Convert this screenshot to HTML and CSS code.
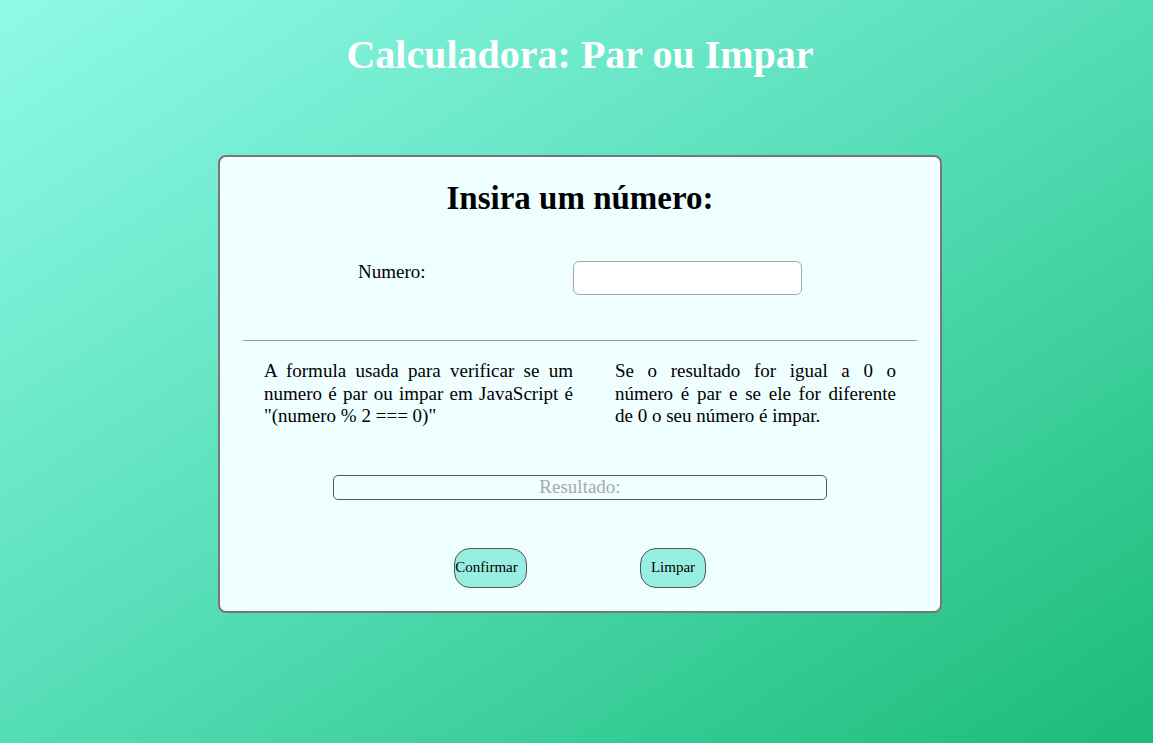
FILE: index.html
```html
<!DOCTYPE html>
<html lang="pt">
<head>
<meta charset="utf-8">
<title>Calculadora: Par ou Impar</title>
<link rel="stylesheet" href="styles.css">
</head>
<body>
<h1 class="title">Calculadora: Par ou Impar</h1>
<main class="card">
  <h2 class="card-title">Insira um número:</h2>
  <div class="field">
    <label class="field-label" for="numero">Numero:</label>
    <input class="field-input" id="numero" type="text">
  </div>
  <hr class="divider">
  <div class="info">
    <p class="info-text info-left">A formula usada para verificar se um numero é par ou impar em JavaScript é "(numero % 2 === 0)"</p>
    <p class="info-text info-right">Se o resultado for igual a 0 o número é par e se ele for diferente de 0 o seu número é impar.</p>
  </div>
  <div class="result-row">
    <input class="result" type="text" placeholder="Resultado:" readonly>
  </div>
  <div class="buttons">
    <button class="btn btn-confirm" type="button">Confirmar</button>
    <button class="btn btn-clear" type="button">Limpar</button>
  </div>
</main>
</body>
</html>
```
FILE: styles.css
```css
html, body {
  margin: 0;
  padding: 0;
}
body {
  min-height: 743px;
  background: linear-gradient(to bottom right, #8ffae8 0%, #55ddb6 50%, #1bbb78 100%);
  font-family: "Liberation Serif", "Times New Roman", serif;
  overflow: hidden;
}
.title {
  margin: 0;
  padding-top: 32px;
  height: 155px;
  box-sizing: border-box;
  text-align: center;
  color: #ffffff;
  font-size: 40px;
  font-weight: bold;
  line-height: 46px;
  padding-left: 7px;
}
.card {
  box-sizing: border-box;
  width: 724px;
  height: 458px;
  margin-left: 218px;
  background: #efffff;
  border: 2px solid #777777;
  border-radius: 8px;
  padding: 21px 23px 0 23px;
  color: #000;
}
.card-title {
  margin: 0;
  text-align: center;
  font-size: 33px;
  line-height: 40px;
  font-weight: bold;
}
.field {
  display: flex;
  margin-top: 43px;
  height: 34px;
}
.field-label {
  font-size: 19px;
  line-height: 22px;
  margin-left: 115px;
  width: 215px;
}
.field-input {
  box-sizing: border-box;
  width: 229px;
  height: 34px;
  border: 1px solid #a8a8a8;
  border-radius: 6px;
  background: #fff;
  margin: 0;
  padding: 0 6px;
  font-size: 16px;
}
.divider {
  margin: 45px 0 0 0;
  border: 0;
  border-top: 1px solid #999;
  height: 0;
}
.info {
  display: flex;
  margin-top: 19px;
  padding-left: 21px;
}
.info-text {
  margin: 0;
  font-size: 19px;
  line-height: 22.5px;
  text-align: justify;
}
.info-left {
  width: 309px;
}
.info-right {
  width: 281px;
  margin-left: 42px;
}
.result-row {
  margin-top: 47px;
  padding-left: 90px;
}
.result {
  box-sizing: border-box;
  width: 494px;
  height: 25px;
  border: 1px solid #555;
  border-radius: 5px;
  background: #efffff;
  text-align: center;
  font-family: "Liberation Serif", "Times New Roman", serif;
  font-size: 19px;
  padding: 0;
  margin: 0;
  display: block;
}
.result::placeholder {
  color: #a9a9a9;
}
.buttons {
  display: flex;
  margin-top: 48px;
  padding-left: 211px;
}
.btn {
  box-sizing: border-box;
  height: 40px;
  border: 1px solid #555;
  border-radius: 16px;
  background: #99eee2;
  font-family: "Liberation Serif", "Times New Roman", serif;
  font-size: 15px;
  color: #000;
  padding: 0;
  margin: 0;
}
.btn-confirm {
  width: 73px;
  padding-right: 8px;
}
.btn-clear {
  width: 66px;
  margin-left: 113px;
}
```
